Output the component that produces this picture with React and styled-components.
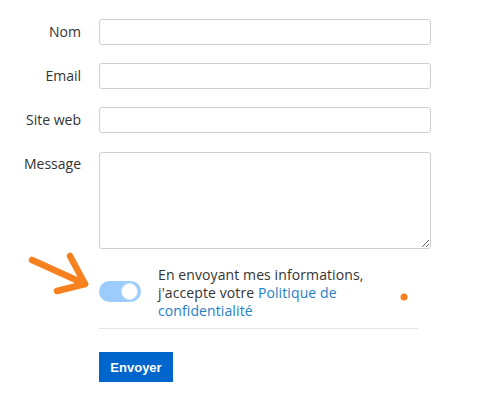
import React from "react";
import styled, { createGlobalStyle } from "styled-components";

const Global = createGlobalStyle`
  html, body { margin: 0; padding: 0; background: #fff; }
  body { font-family: "Open Sans", "Liberation Sans", sans-serif; color: #333; }
`;

const Page = styled.div`
  position: relative;
  width: 480px;
  height: 406px;
  overflow: hidden;
`;

const Form = styled.form`
  width: 418px;
  padding-top: 19px;
`;

const Fields = styled.div`
  display: grid;
  grid-template-columns: 81px 332px;
  column-gap: 18px;
  row-gap: 18px;
`;

const Label = styled.label`
  font-size: 14px;
  color: #333;
  text-align: right;
  align-self: ${(p) => (p.$top ? "start" : "center")};
  padding-top: ${(p) => (p.$top ? "4px" : "0")};
  line-height: 18px;
`;

const Input = styled.input`
  box-sizing: border-box;
  width: 332px;
  height: 26px;
  border: 1px solid #cfcfcf;
  border-radius: 3px;
  background: #fff;
  font-family: inherit;
  font-size: 14px;
  padding: 2px 6px;
  outline: none;
`;

const TextArea = styled.textarea`
  box-sizing: border-box;
  width: 332px;
  height: 97px;
  border: 1px solid #cfcfcf;
  border-radius: 3px;
  background: #fff;
  font-family: inherit;
  font-size: 14px;
  padding: 4px 6px;
  outline: none;
  display: block;
  margin-top: 1px;
`;

const ConsentWrap = styled.div`
  width: 418px;
`;

const Consent = styled.div`
  display: flex;
  align-items: center;
  gap: 17px;
  margin-left: 99px;
  padding-top: 17px;
  padding-bottom: 8px;
  border-bottom: 1px solid #e6e6e6;
  margin-bottom: 23px;
`;

const Toggle = styled.span`
  position: relative;
  flex: 0 0 auto;
  width: 42px;
  height: 21px;
  border-radius: 11px;
  background: ${(p) => (p.$on ? "#9cccfb" : "#ccc")};
  margin-top: -4px;
`;

const Knob = styled.span`
  position: absolute;
  top: 2px;
  right: 3px;
  width: 17px;
  height: 17px;
  box-sizing: border-box;
  border-radius: 50%;
  background: #fff;
  border: 1px solid #d8e8f8;
`;

const ConsentText = styled.div`
  width: 220px;
  font-size: 14px;
  line-height: 18px;
  letter-spacing: 0.1px;
  color: #333;
`;

const Line = styled.div`
  white-space: nowrap;
`;

const Link = styled.a`
  color: #1f7ec6;
  text-decoration: none;
`;

const ButtonRow = styled.div`
  padding-left: 99px;
`;

const Button = styled.button`
  width: 74px;
  height: 30px;
  border: none;
  background: #0066cc;
  color: #fff;
  font-family: "Liberation Sans", Arial, sans-serif;
  font-weight: bold;
  font-size: 13px;
  padding: 0;
  cursor: pointer;
`;

const Overlay = styled.svg`
  position: absolute;
  left: 0;
  top: 0;
  pointer-events: none;
`;

export default function App() {
  return (
    <Page>
      <Global />
      <Form onSubmit={(e) => e.preventDefault()}>
        <Fields>
          <Label>Nom</Label>
          <Input type="text" />
          <Label>Email</Label>
          <Input type="text" />
          <Label>Site web</Label>
          <Input type="text" />
          <Label $top>Message</Label>
          <TextArea />
        </Fields>
        <ConsentWrap>
          <Consent>
            <Toggle $on>
              <Knob />
            </Toggle>
            <ConsentText>
              <Line>En envoyant mes informations,</Line>
              <Line>
                j'accepte votre <Link href="#">Politique de</Link>
              </Line>
              <Line>
                <Link href="#">confidentialité</Link>
              </Line>
            </ConsentText>
          </Consent>
        </ConsentWrap>
        <ButtonRow>
          <Button type="submit">Envoyer</Button>
        </ButtonRow>
      </Form>
      <Overlay width="480" height="406" viewBox="0 0 480 406">
        <g stroke="#f7811f" strokeWidth="6.5" strokeLinecap="round" strokeLinejoin="round" fill="none">
          <path d="M32 260 L85 284" />
          <path d="M70 256 L85 284 L57 291" />
        </g>
        <circle cx="404" cy="297" r="3.5" fill="#f7811f" />
      </Overlay>
    </Page>
  );
}
